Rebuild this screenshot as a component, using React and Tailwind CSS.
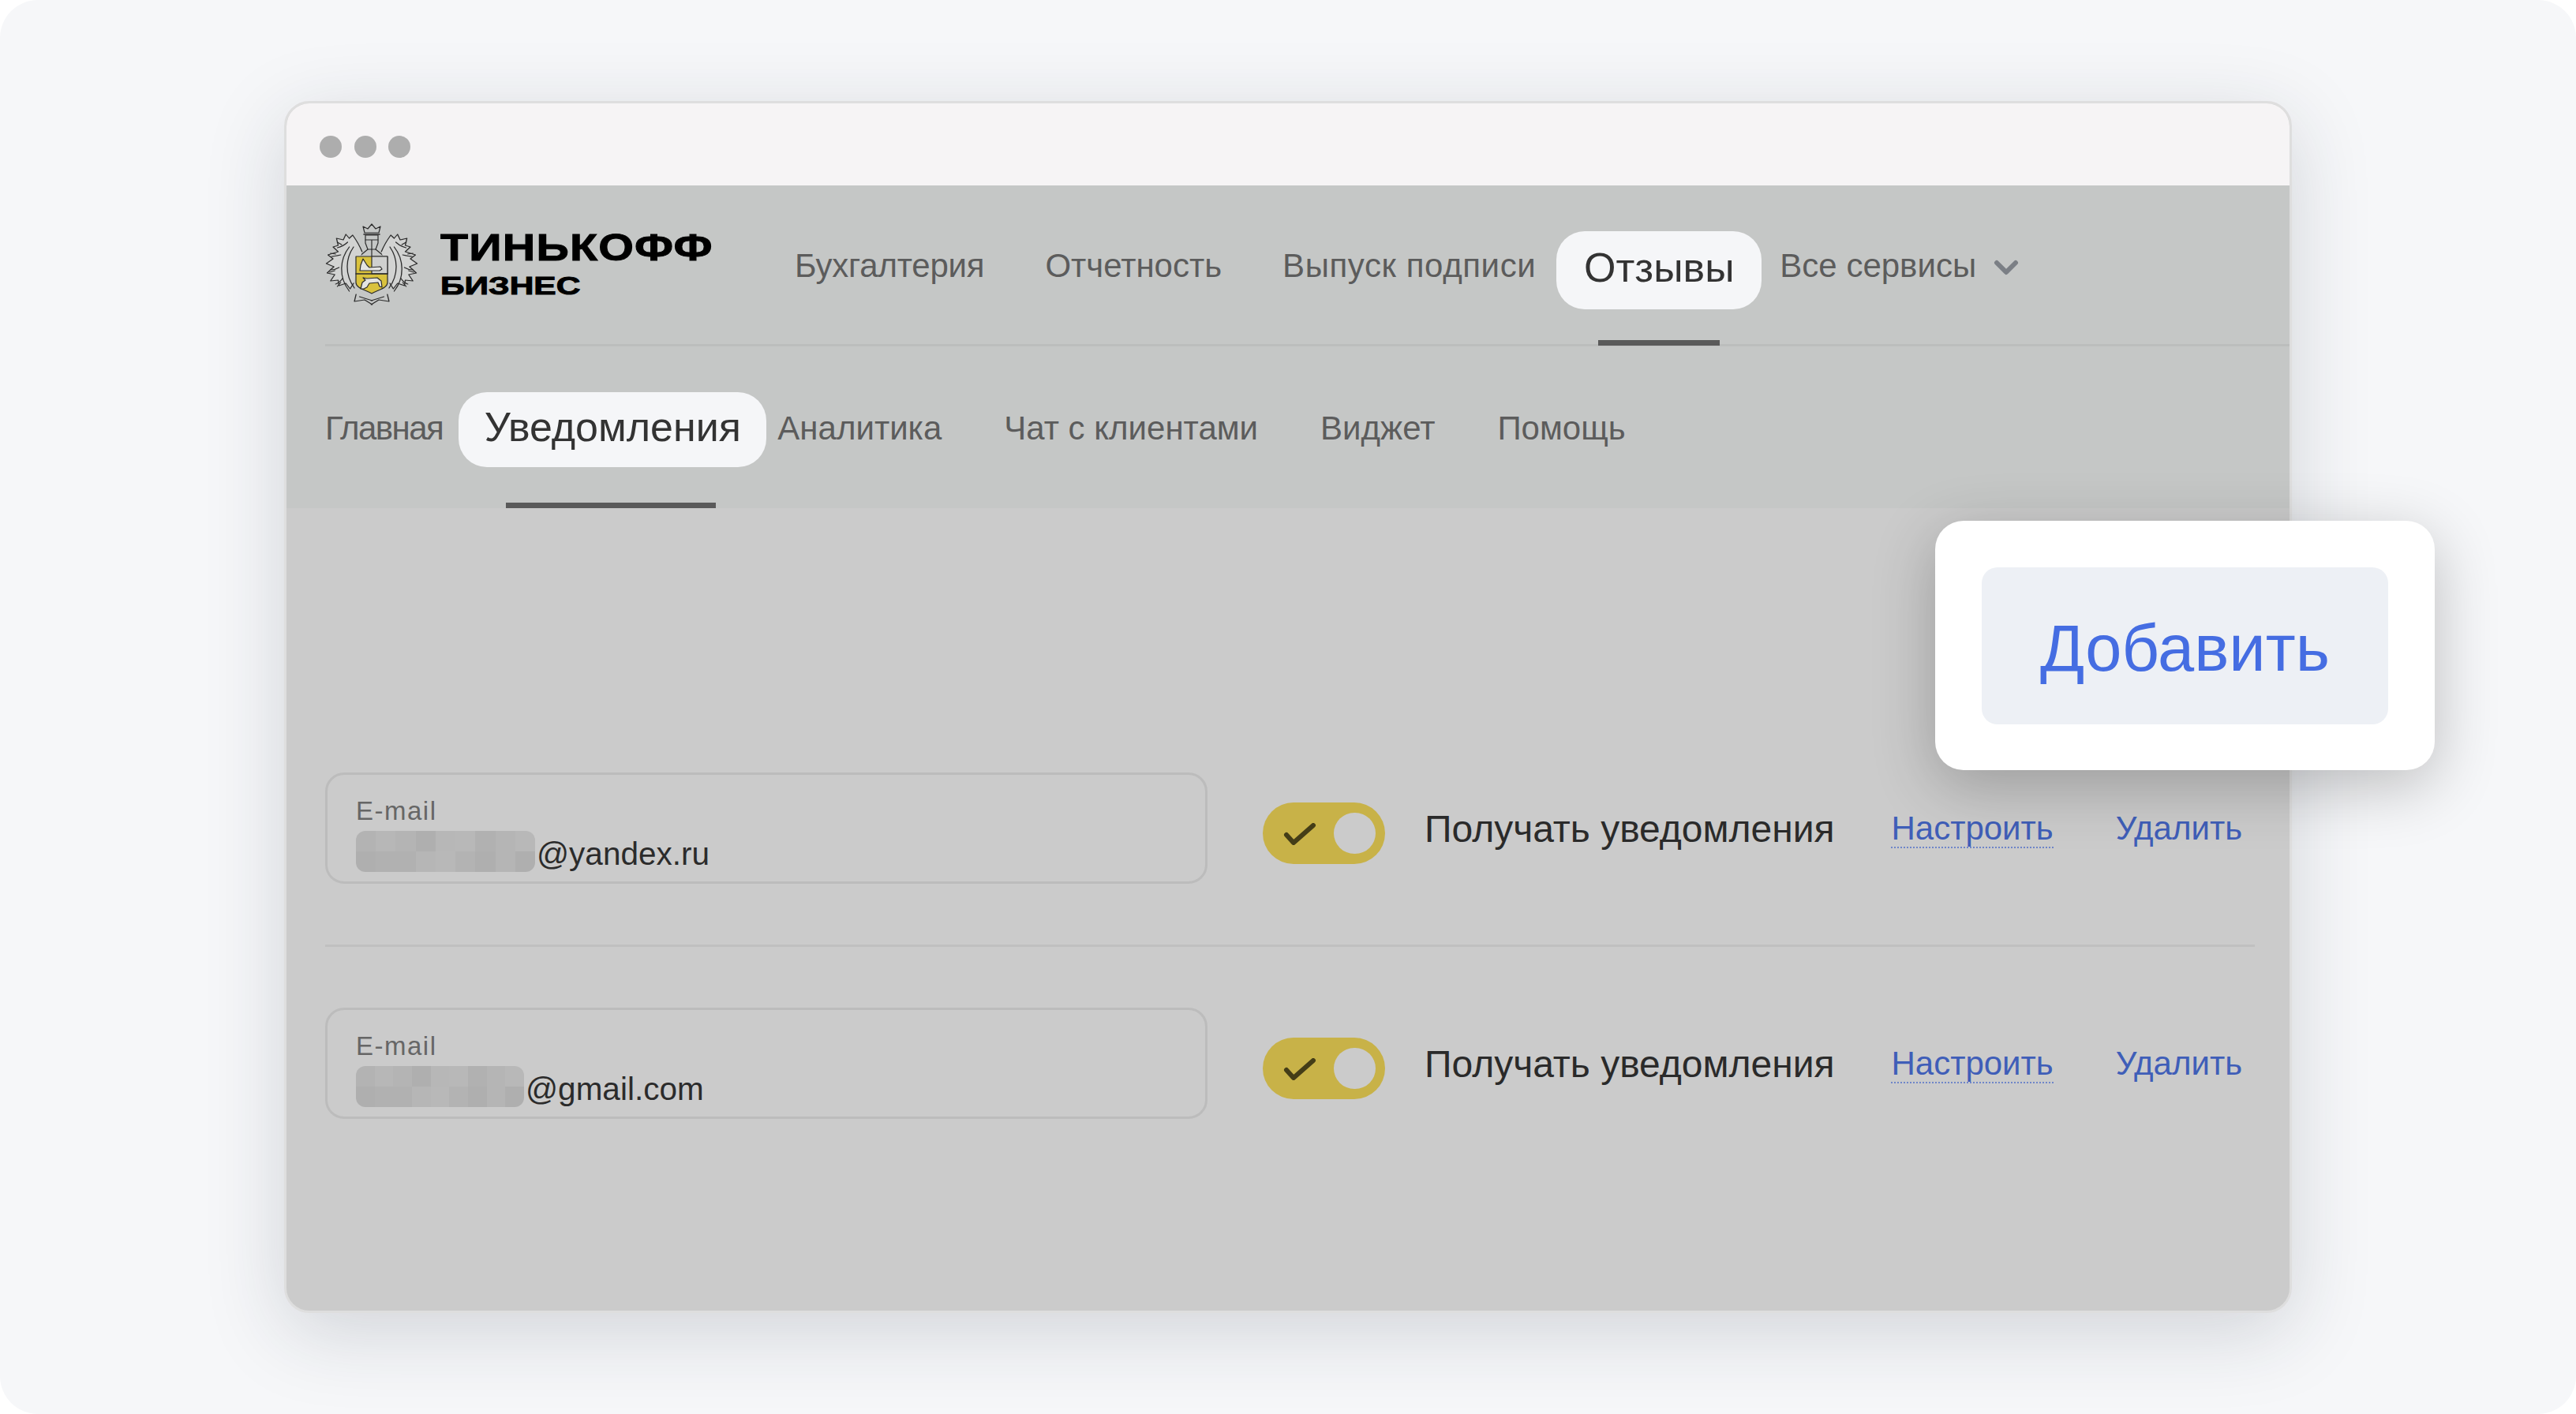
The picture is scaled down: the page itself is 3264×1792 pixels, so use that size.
const sans = "font-['Liberation_Sans',Arial,sans-serif]";

const topLinks = [
  { t: "Бухгалтерия", c: "tracking-[-0.2px]" },
  { t: "Отчетность", c: "" },
  { t: "Выпуск подписи", c: "tracking-[0.6px]" },
];
const subLinks = ["Аналитика", "Чат с клиентами", "Виджет", "Помощь"];

function Crest() {
  return (
    <svg viewBox="0 0 118 106" className="w-[118px] h-[106px] shrink-0" fill="none" stroke="#2c2c2c" strokeWidth="1.2" strokeLinejoin="round" strokeLinecap="round">
      <path d="M50 12L48 4l6 3 5-6 5 6 6-3-2 8z" />
      <path d="M49 14h20" strokeWidth="1.6" />
      <path d="M51 15h16v10l-3 8H54l-3-8z" />
      <path d="M51 21h16M59 21v12" />
      <path d="M54 33L43 42M64 33l11 9M59 33v9" />
      {[0, 1].map((side) => (
        <g key={side} transform={side ? "translate(118,0) scale(-1,1)" : undefined}>
          <g transform="translate(-4,0) scale(1.08,1)">
            <path d="M47 36c-3-8-7-15-11-21l-4 4-4-5-3 7-8-2 2 9-6 2 6 6-12 4 6 5-8 6 9 4-8 8 9 2-5 8 9-1 1 7 8-3 5 7 4-7" fill="#d2d3d2" />
            <path d="M30 24c-4 4-8 6-12 7M22 40c-4 1-8 2-11 2M20 56c-3 2-7 3-10 3M24 70c-2 3-5 6-8 7" />
            <path d="M37 30c-9 14-11 34 1 52M32 30c-11 15-13 38 0 56" />
            <path d="M18 24l5 3M10 38l6 1M9 62l6-2M18 80l4-5" />
            <path d="M40 90l-2 9 12-2 9 6" />
            <path d="M44 93l15 5" />
          </g>
        </g>
      ))}
      <path d="M39 42h40v33c0 7-11 9-20 14-9-5-20-7-20-14z" fill="#d9c23e" />
      <path d="M59 42h20v22H59z" fill="#cfd0cf" />
      <path d="M39 64h40" strokeWidth="1.6" />
      <path d="M44 60l1-7 3-8 5 8 3 3 14-1 2 3-3 2H46z" fill="#e4e4e2" />
      <path d="M45 83l2-8 4-3-3-3 5 1 13-1 5 4 1 8-3-1-2-5-11 1-3 5-4 2z" fill="#e4e4e2" />
    </svg>
  );
}

function Field({ domain, blur, widths }) {
  return (
    <div className="w-[1118px] h-[141px] border-[3px] border-[#bcbcbc] rounded-[24px] pl-[36px] pt-[27px] shrink-0">
      <div className="text-[#666666] text-[33px] leading-[38px] tracking-[1.5px]">E-mail</div>
      <div className="flex items-end">
        <div className={`grid grid-cols-9 grid-rows-2 overflow-hidden rounded-[12px] h-[52px] mt-[6px] shrink-0 ${widths}`}>
          {blur.map((c, i) => (
            <div key={i} style={{ backgroundColor: c }} />
          ))}
        </div>
        <span className="text-[#2b2b2b] text-[40.5px] leading-[46px] ml-[2px]">{domain}</span>
      </div>
    </div>
  );
}

function Row({ domain, blur, widths }) {
  return (
    <div className="flex items-center">
      <Field domain={domain} blur={blur} widths={widths} />
      <div className="ml-[70px] w-[155px] h-[78px] rounded-full bg-[#c8b248] relative shrink-0 mt-[13px]">
        <svg viewBox="0 0 42 28" className="absolute left-[26px] top-[26px] w-[42px] h-[28px]" fill="none" stroke="#443d17" strokeWidth="6" strokeLinecap="round" strokeLinejoin="round">
          <path d="M4 15l9 10L38 3" />
        </svg>
        <div className="absolute right-[12px] top-[13px] w-[53px] h-[52px] rounded-full bg-[#cbcbcb]" />
      </div>
      <span className="ml-[50px] mt-[3px] text-[#2a2a2a] text-[48px] leading-[54px] whitespace-nowrap">Получать уведомления</span>
      <span className="ml-[72px] mt-[3px] text-[#3f5eb8] text-[42px] leading-[46px] border-b-[2px] border-dotted border-[#6f86c8] whitespace-nowrap">Настроить</span>
      <span className="ml-[79px] mt-[3px] text-[#3f5eb8] text-[42px] leading-[46px] border-b-[2px] border-transparent whitespace-nowrap">Удалить</span>
    </div>
  );
}

const g = ["#b3b3b3","#b7b7b7","#b4b4b4","#afafaf","#b7b7b7","#b8b8b8","#b1b1b1","#b5b5b5","#b8b8b8",
           "#afafaf","#b1b1b1","#b1b1b1","#b6b6b6","#b8b8b8","#b3b3b3","#afafaf","#b5b5b5","#afafaf"];

export default function App() {
  return (
    <div className={`w-[3264px] h-[1792px] bg-white overflow-hidden ${sans}`}>
      <div className="w-full h-full bg-[#f6f7f9] rounded-[48px] pt-[128px] pl-[360px] relative">
        <div className="w-[2544px] h-[1536px] rounded-[32px] bg-[#cbcbcb] border-[3px] border-[#dedede] overflow-hidden shadow-[0_24px_100px_rgba(30,40,60,0.17)] flex flex-col">
          <div className="h-[104px] bg-[#f6f4f5] flex items-center gap-[15.5px] pl-[42px] pt-[6px] shrink-0">
            <span className="w-[28px] h-[28px] rounded-full bg-[#adadad]" />
            <span className="w-[28px] h-[28px] rounded-full bg-[#adadad]" />
            <span className="w-[28px] h-[28px] rounded-full bg-[#adadad]" />
          </div>
          <div className="h-[409px] bg-[#c5c7c6] shrink-0 pl-[49px] flex flex-col">
            <div className="h-[204px] border-b-[3px] border-[#bcbebd] flex items-start relative shrink-0">
              <div className="flex items-start pt-[48px] shrink-0">
                <Crest />
                <div className="ml-[28px] pt-[5px] w-[342px] text-black font-bold [-webkit-text-stroke:1px_black]">
                  <div className="text-[49px] leading-[50px] whitespace-nowrap [transform:scaleX(1.173)] origin-left tracking-[1px]">ТИНЬКОФФ</div>
                  <div className="text-[32px] leading-[36px] mt-[6px] whitespace-nowrap [transform:scaleX(1.327)] origin-left">БИЗНЕС</div>
                </div>
              </div>
              <div className="flex items-start gap-[77px] pt-[78px] ml-[107px] shrink-0">
                {topLinks.map((l) => (
                  <span key={l.t} className={`${l.c} text-[#5c5c5c] text-[42px] leading-[48px] whitespace-nowrap`}>{l.t}</span>
                ))}
              </div>
              <span className="w-[260px] h-[99px] mt-[58px] ml-[26px] rounded-[36px] bg-[#f5f6f8] text-[#333] text-[52px] leading-[93px] text-center shrink-0">Отзывы</span>
              <div className="ml-[23px] pt-[78px] flex items-center gap-[22px] text-[#5c5c5c] text-[42px] leading-[48px] whitespace-nowrap">
                Все сервисы
                <svg viewBox="0 0 32 20" className="w-[32px] h-[20px] mt-[4px]" fill="none" stroke="#7b7f85" strokeWidth="6" strokeLinecap="round" strokeLinejoin="round"><path d="M4 4l12 12L28 4" /></svg>
              </div>
              <div className="absolute left-[1613px] top-[196px] w-[154px] h-[7px] bg-[#5a5a5a]" />
            </div>
            <div className="flex items-start relative">
              <span className="text-[#5c5c5c] text-[42px] leading-[48px] tracking-[-1.5px] pt-[80px] shrink-0 whitespace-nowrap">Главная</span>
              <span className="mt-[58px] ml-[20px] w-[390px] h-[95px] shrink-0 rounded-[36px] bg-[#f5f6f8] text-[#333] text-[52px] leading-[89px] text-center whitespace-nowrap">Уведомления</span>
              <div className="flex gap-[79px] pt-[80px] ml-[14px]">
                {subLinks.map((t) => (
                  <span key={t} className="shrink-0 text-[#5c5c5c] text-[42px] leading-[48px] whitespace-nowrap">{t}</span>
                ))}
              </div>
              <div className="absolute left-[229px] top-[198px] w-[266px] h-[7px] bg-[#5a5a5a]" />
            </div>
          </div>
          <div className="pl-[49px] pr-[44px] pt-[335px]">
            <Row domain="@yandex.ru" blur={g} widths="w-[227px]" />
            <div className="h-[3px] bg-[#c0c0c0] mt-[77px] mb-[77px]" />
            <Row domain="@gmail.com" blur={g} widths="w-[213px]" />
          </div>
        </div>
        <div className="absolute left-[2452px] top-[660px] w-[633px] h-[316px] bg-white rounded-[36px] flex items-center justify-center shadow-[0_20px_80px_rgba(0,0,0,0.24)]">
          <div className="w-[515px] h-[199px] rounded-[20px] bg-[#edf0f5] text-[#456de2] text-[83px] leading-[205px] text-center">Добавить</div>
        </div>
      </div>
    </div>
  );
}
